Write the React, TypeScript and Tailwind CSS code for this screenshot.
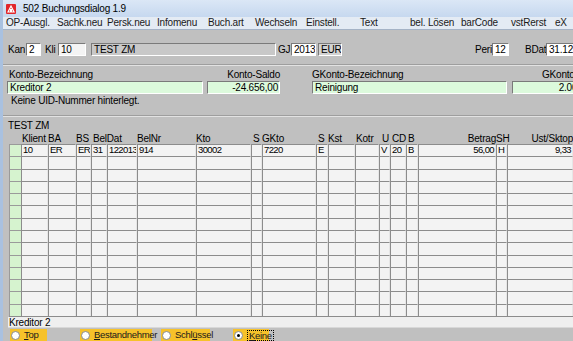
import React from "react";

const MENU: { label: string; w: string }[] = [
  { label: "OP-Ausgl.", w: "w-[51px]" },
  { label: "Sachk.neu", w: "w-[50px]" },
  { label: "Persk.neu", w: "w-[50px]" },
  { label: "Infomenu", w: "w-[51px]" },
  { label: "Buch.art", w: "w-[47px]" },
  { label: "Wechseln", w: "w-[51px]" },
  { label: "Einstell.", w: "w-[54px]" },
  { label: "Text", w: "w-[50px]" },
  { label: "bel. Lösen", w: "w-[51px]" },
  { label: "barCode", w: "w-[50px]" },
  { label: "vstRerst", w: "w-[44px]" },
  { label: "eX", w: "w-[20px]" },
];

// one entry per grid column; r = right aligned value
const FIRST_ROW: { v: string; r?: boolean }[] = [
  { v: "10" },
  { v: "ER" },
  { v: "ER" },
  { v: "31" },
  { v: "122013" },
  { v: "914" },
  { v: "30002" },
  { v: "" },
  { v: "7220" },
  { v: "E" },
  { v: "" },
  { v: "" },
  { v: "V" },
  { v: "20" },
  { v: "B" },
  { v: "56,00", r: true },
  { v: "H" },
  { v: "9,33", r: true },
];

const COLS =
  "grid-cols-[12px_27px_28px_15px_16px_30px_59px_55px_11px_54px_12px_27px_24px_11px_16px_12px_78px_11px_66px]";

function Cell({ v = "", r = false }: { v?: string; r?: boolean }) {
  return (
    <div
      className={`overflow-hidden whitespace-nowrap border-t border-l border-[#8c8c8c] border-r border-r-[#e6e6e6] bg-[#f3f3f3] px-[1px] text-[9.5px] leading-[10px] tracking-[-0.6px] ${
        r ? "text-right" : ""
      }`}
    >
      {v}
    </div>
  );
}

function Sunken({ className = "", children }: { className?: string; children?: React.ReactNode }) {
  return (
    <div
      className={`flex h-[13px] shrink-0 items-center overflow-hidden whitespace-nowrap border-t border-l border-[#7a7a7a] border-b border-r border-b-white border-r-white pl-[2px] ${className}`}
    >
      {children}
    </div>
  );
}

function Radio({ under, rest, checked, w, pre = "" }: { under: string; rest: string; checked?: boolean; w: string; pre?: string }) {
  return (
    <div className={`flex h-[12px] shrink-0 items-center gap-[4px] bg-[#f6c22a] pl-[1px] ${w}`}>
      <span className="flex h-[9px] w-[9px] shrink-0 items-center justify-center rounded-full border border-[#8a8a8a] bg-white">
        {checked && <span className="h-[3px] w-[3px] rounded-full bg-black" />}
      </span>
      <span className={checked ? "border border-dotted border-black px-[1px] leading-[9px]" : ""}>
        {pre}
        <span className="underline">{under}</span>
        {rest}
      </span>
    </div>
  );
}

export default function App() {
  const rows = Array.from({ length: 14 }, (_, i) => i);
  return (
    <div className="h-[341px] w-[573px] overflow-hidden border-l-[3px] border-[#a9c1e0] bg-[#c0c0c0] font-['Liberation_Sans',Arial,sans-serif] text-[10px] tracking-[-0.2px] text-black">
      {/* Title bar */}
      <div className="flex h-[17px] items-center gap-[7px] bg-gradient-to-b from-[#dbe7f6] to-[#c6d8ef] pl-[3px] text-[10px]">
        <svg width="10" height="10" viewBox="0 0 10 10">
          <rect x="0" y="0" width="10" height="10" rx="1" fill="#e2262b" />
          <path d="M2 8 L5 2 L8 8 Z" fill="none" stroke="#fff" strokeWidth="1.2" />
          <rect x="4" y="5" width="2" height="3" fill="#fff" />
        </svg>
        <span>502 Buchungsdialog 1.9</span>
      </div>

      {/* Menu */}
      <div className="flex h-[13px] items-center border-b border-[#a5b3c6] bg-[#e4ebf4] pl-[3px] leading-none text-[#1a1a1a]">
        {MENU.map((m) => (
          <span key={m.label} className={`${m.w} shrink-0 whitespace-nowrap`}>
            {m.label}
          </span>
        ))}
      </div>

      {/* Header fields */}
      <div className="mt-[13px] flex h-[13px] items-center whitespace-nowrap">
        <span className="ml-[5px] w-[18px] shrink-0">Kan</span>
        <Sunken className="w-[15px] bg-white">2</Sunken>
        <span className="ml-[4px] w-[13px] shrink-0">Kli</span>
        <Sunken className="w-[28px] bg-[#f4f4f4]">10</Sunken>
        <Sunken className="ml-[5px] w-[185px] bg-[#c8c8c8]">TEST ZM</Sunken>
        <span className="ml-[2px] w-[13px] shrink-0">GJ</span>
        <Sunken className="w-[25px] bg-white">2013</Sunken>
        <Sunken className="ml-[2px] w-[24px] bg-[#d2d2d2]">EUR</Sunken>
        <span className="ml-[133px] w-[17px] shrink-0">Peri</span>
        <Sunken className="w-[17px] bg-white">12</Sunken>
        <span className="ml-[16px] w-[21px] shrink-0">BDat</span>
        <Sunken className="w-[40px] bg-white">31.12.2013</Sunken>
      </div>

      <div className="mt-[8px] h-[2px] border-t border-[#9e9e9e] border-b border-b-[#e2e2e2]" />

      {/* Konto area */}
      <div className="mt-[3px] flex h-[11px] items-center whitespace-nowrap leading-none">
        <span className="ml-[6px] w-[198px] shrink-0">Konto-Bezeichnung</span>
        <span className="w-[73px] shrink-0 text-right">Konto-Saldo</span>
        <span className="ml-[32px] w-[198px] shrink-0">GKonto-Bezeichnung</span>
        <span className="ml-[32px] shrink-0">GKonto-Saldo</span>
      </div>
      <div className="mt-[1px] flex">
        <Sunken className="ml-[4px] w-[196px] bg-[#dcfadc]">Kreditor 2</Sunken>
        <Sunken className="ml-[4px] w-[73px] justify-end bg-[#dcfadc] pr-[1px]">-24.656,00</Sunken>
        <Sunken className="ml-[32px] w-[195px] bg-[#dcfadc]">Reinigung</Sunken>
        <Sunken className="ml-[5px] w-[86px] justify-end bg-[#dcfadc] pr-[1px]">2.000,00</Sunken>
      </div>
      <div className="mt-[1px] h-[11px] pl-[8px] leading-[11px]">Keine UID-Nummer hinterlegt.</div>

      <div className="mt-[9px] h-[2px] border-t border-[#9e9e9e] border-b border-b-[#e2e2e2]" />

      {/* Table */}
      <div className="ml-[5px] mt-[3px] h-[12px] leading-[12px]">TEST ZM</div>
      <div className={`ml-[6px] mt-[1px] grid h-[11px] ${COLS} whitespace-nowrap leading-[11px]`}>
        <span />
        <span className="pl-[1px]">Klient</span>
        <span>BA</span>
        <span>BS</span>
        <span className="overflow-visible pl-[2px]">BelDat</span>
        <span />
        <span>BelNr</span>
        <span>Kto</span>
        <span className="pl-[2px]">S</span>
        <span>GKto</span>
        <span className="pl-[2px]">S</span>
        <span>Kst</span>
        <span className="pl-[1px]">Kotr</span>
        <span className="pl-[3px]">U</span>
        <span className="pl-[2px]">CD</span>
        <span className="pl-[2px]">B</span>
        <span className="text-right">Betrag</span>
        <span>SH</span>
        <span className="text-right">Ust/Sktop</span>
      </div>
      <div className={`ml-[6px] grid h-[173px] grid-rows-[repeat(14,1fr)] ${COLS} border-b border-[#8c8c8c] bg-[#f7f7f7]`}>
        {rows.map((i) => (
          <React.Fragment key={i}>
            <div className="border-t border-l border-[#9a9a9a] bg-[#d6f3cf]" />
            {FIRST_ROW.map((c, j) => (
              <Cell key={j} v={i === 0 ? c.v : ""} r={c.r} />
            ))}
          </React.Fragment>
        ))}
      </div>

      {/* Status line */}
      <div className="ml-[5px] h-[11px] border-b border-[#d8d8d8] bg-[#efefef] pl-[1px] leading-[11px]">Kreditor 2</div>

      {/* Radios */}
      <div className="mt-[1px] flex items-center whitespace-nowrap text-[9.5px] tracking-[-0.3px] text-[#1a1a1a]">
        <Radio w="ml-[7px] w-[37px]" under="T" rest="op" />
        <Radio w="ml-[33px] w-[72px]" under="B" rest="estandnehmer" />
        <Radio w="ml-[9px] w-[49px]" pre="Schl" under="ü" rest="ssel" />
        <Radio w="ml-[23px] w-[36px]" under="K" rest="eine" checked />
      </div>
    </div>
  );
}
